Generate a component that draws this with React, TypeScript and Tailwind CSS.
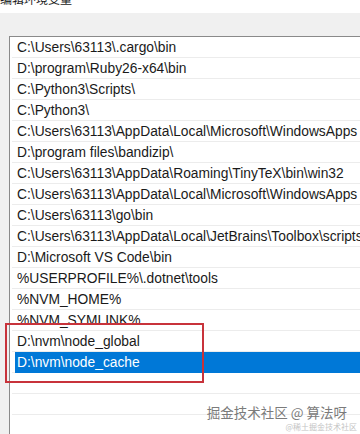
import React from 'react';

const paths = [
  'C:\\Users\\63113\\.cargo\\bin',
  'D:\\program\\Ruby26-x64\\bin',
  'C:\\Python3\\Scripts\\',
  'C:\\Python3\\',
  'C:\\Users\\63113\\AppData\\Local\\Microsoft\\WindowsApps',
  'D:\\program files\\bandizip\\',
  'C:\\Users\\63113\\AppData\\Roaming\\TinyTeX\\bin\\win32',
  'C:\\Users\\63113\\AppData\\Local\\Microsoft\\WindowsApps',
  'C:\\Users\\63113\\go\\bin',
  'C:\\Users\\63113\\AppData\\Local\\JetBrains\\Toolbox\\scripts',
  'D:\\Microsoft VS Code\\bin',
  '%USERPROFILE%\\.dotnet\\tools',
  '%NVM_HOME%',
  '%NVM_SYMLINK%',
  'D:\\nvm\\node_global',
  'D:\\nvm\\node_cache',
  '',
  '',
  '',
];

const SELECTED = 15;

export default function App() {
  return (
    <div
      className="relative flex flex-col w-[360px] h-[434px] overflow-hidden bg-[#f0f0f0] text-[#1a1a1a]"
      style={{ fontFamily: '"Liberation Sans", "Noto Sans CJK SC", sans-serif' }}
    >
      {/* dialog title, cut off at the top */}
      <div className="h-[13px] shrink-0 overflow-hidden bg-white">
        <p className="-mt-[7px] text-[12px] leading-[12px] whitespace-nowrap" style={{ fontFamily: '"Noto Sans CJK SC", sans-serif' }}>
          编辑环境变量
        </p>
      </div>

      <div className="flex flex-col pt-[23px] pl-[9px]">
        <div className="flex flex-col border-l border-t border-[#8a8a8a] bg-white pl-[2px]">
          {paths.map((p, i) => (
            <div key={i} className="flex h-[21px] shrink-0 border-b border-[#ececec]">
              <div
                className={`flex-1 ml-[3px] h-[21px] -mb-px pl-[2px] pt-px text-[13.8px] leading-[20px] whitespace-nowrap ${
                  i === SELECTED ? 'bg-[#0078d7] text-white' : ''
                }`}
              >
                {p}
              </div>
            </div>
          ))}
        </div>
      </div>

      {/* red highlight box */}
      <div className="absolute left-[5px] top-[323px] w-[199px] h-[60px] border-2 border-[#c8333b]" />

      {/* watermark */}
      <div
        className="absolute right-[13px] top-[404px] flex flex-col items-end"
        style={{ fontFamily: '"Noto Sans CJK SC", sans-serif' }}
      >
        <span className="text-[13.5px] leading-[16px] text-[#7b7b7b] whitespace-nowrap" style={{ textShadow: '0 0 2px #ffffff' }}>
          掘金技术社区 @ 算法呀
        </span>
        <span className="-mr-[10px] mt-[2px] text-[8px] leading-[10px] text-[#c4c4c4] whitespace-nowrap">
          @稀土掘金技术社区
        </span>
      </div>
    </div>
  );
}
